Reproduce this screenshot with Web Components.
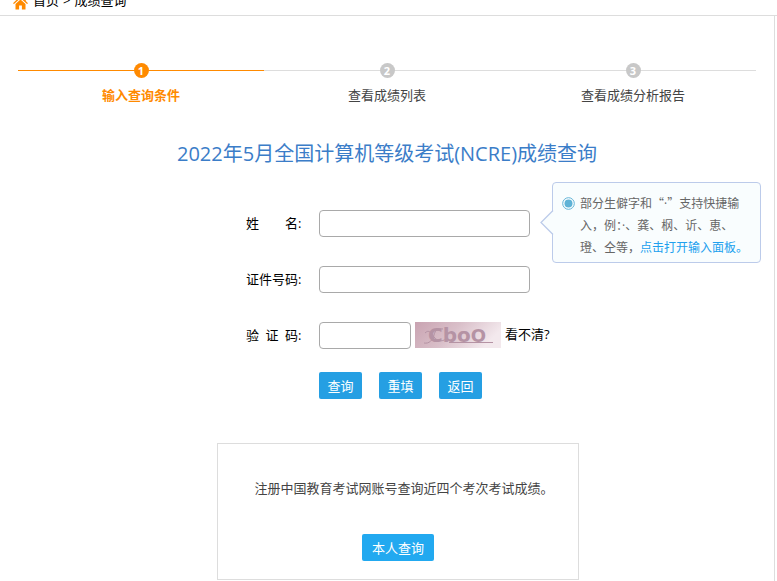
<!DOCTYPE html>
<html lang="zh-CN">
<head>
<meta charset="utf-8">
<meta name="viewport" content="width=device-width, initial-scale=1">
<title>成绩查询</title>
<style>
    body {
        margin: 0;
        overflow: hidden;
        background: #fff;
        color: #000;
        font: 13px/20px "Open Sans", "Noto Sans CJK SC", sans-serif;
    }
    main {
        margin-right: 2px;
        padding: 44px 18px 1px;
        border-right: 1px solid #ddd;
    }
    h1 {
        margin: 33px 0 0;
        color: #3b7dc8;
        font-size: 20px;
        font-weight: 400;
        line-height: 32px;
        text-align: center;
    }
</style>
</head>
<body>
<page-crumbs current="成绩查询"></page-crumbs>
<main>
    <step-bar>
        <step-item number="1" active>输入查询条件</step-item>
        <step-item number="2">查看成绩列表</step-item>
        <step-item number="3">查看成绩分析报告</step-item>
    </step-bar>
    <h1>2022年5月全国计算机等级考试(NCRE)成绩查询</h1>
    <query-form></query-form>
    <account-box>注册中国教育考试网账号查询近四个考次考试成绩。</account-box>
</main>

<script>
class PageCrumbs extends HTMLElement {
    constructor() {
        super();
        this.attachShadow({ mode: 'open' });
        this.shadowRoot.innerHTML = `
        <style>
            :host {
                display: block;
                margin-top: -13px;
                border-bottom: 1px solid #ddd;
            }
            nav {
                display: flex;
                align-items: center;
                gap: 4px;
                height: 26px;
                padding: 0 0 2px 13px;
            }
            a {
                color: inherit;
                text-decoration: none;
            }
            svg {
                display: block;
                margin: 4px 1px 0 0;
            }
        </style>
        <nav>
            <svg width="15" height="15" viewBox="0 0 15 15" fill="#ff8a00" aria-hidden="true">
                <path d="M7.5 1 0 8.2l1 .9 6.5-6 6.5 6 1-.9-2.2-2.1V2h-2v2.2z"/>
                <path d="M7.5 4.5 2.5 9v5.5h3.6v-4h2.8v4h3.6V9z"/>
            </svg>
            <a href="#">首页</a>
            <span>&gt;</span>
            <span class="current"></span>
        </nav>
        `;
    }

    connectedCallback() {
        this.shadowRoot.querySelector('.current').textContent = this.getAttribute('current');
    }
}

class StepBar extends HTMLElement {
    constructor() {
        super();
        this.attachShadow({ mode: 'open' });
        this.shadowRoot.innerHTML = `
        <style>
            :host {
                display: grid;
                grid-template-columns: repeat(3, 1fr);
            }
        </style>
        <slot></slot>
        `;
    }
}

class StepItem extends HTMLElement {
    constructor() {
        super();
        this.attachShadow({ mode: 'open' });
        this.shadowRoot.innerHTML = `
        <style>
            :host {
                --line: #ddd;
                --dot: #c8c8c8;
                display: block;
                color: #444;
                text-align: center;
            }
            :host([active]) {
                --line: #ff8a00;
                --dot: #ff8a00;
                color: #ff8a00;
                font-weight: 700;
            }
            .track {
                display: flex;
                align-items: center;
                height: 21px;
            }
            .track::before,
            .track::after {
                content: "";
                flex: 1;
                height: 1px;
                background: var(--line);
            }
            .number {
                width: 15px;
                height: 15px;
                border-radius: 50%;
                background: var(--dot);
                color: #fff;
                font-size: 11px;
                font-weight: 700;
                line-height: 15px;
            }
            .label {
                margin-top: 4px;
            }
        </style>
        <div class="track"><span class="number"></span></div>
        <div class="label"><slot></slot></div>
        `;
    }

    connectedCallback() {
        this.shadowRoot.querySelector('.number').textContent = this.getAttribute('number');
    }
}

class InputTip extends HTMLElement {
    constructor() {
        super();
        this.attachShadow({ mode: 'open' });
        this.shadowRoot.innerHTML = `
        <style>
            :host {
                display: block;
                box-sizing: border-box;
                width: 209px;
                padding: 9px 10px 5px 9px;
                border: 1px solid #bccbea;
                border-radius: 4px;
                background: #f9fdfe;
                color: #666;
                font-family: "Noto Sans CJK SC", sans-serif;
                font-size: 12px;
                line-height: 21px;
            }
            .arrow {
                position: absolute;
                left: -13px;
                top: 26px;
            }
            .body {
                display: flex;
                gap: 5px;
            }
            .dot {
                flex: none;
                margin-top: 5px;
            }
        </style>
        <svg class="arrow" width="14" height="26" viewBox="0 0 14 26" aria-hidden="true">
            <path d="M14 1 1 13.5 14 26z" fill="#f9fdfe"/>
            <path d="M13 1.5 1 13.5 13 25.5" fill="none" stroke="#bccbea" stroke-width="1.3"/>
        </svg>
        <div class="body">
            <svg class="dot" width="13" height="13" viewBox="0 0 13 13" aria-hidden="true">
                <circle cx="6.5" cy="6.5" r="5.8" fill="#fff" stroke="#5fb2d6"/>
                <circle cx="6.5" cy="6.5" r="4" fill="#5fb2d6"/>
            </svg>
            <div><slot></slot></div>
        </div>
        `;
    }
}

class QueryForm extends HTMLElement {
    constructor() {
        super();
        this.attachShadow({ mode: 'open' });
        this.shadowRoot.innerHTML = `
        <style>
            :host {
                display: block;
                position: relative;
                margin-top: 40px;
            }
            form {
                display: grid;
                grid-template-columns: 56px 211px;
                column-gap: 17px;
                row-gap: 29px;
                align-items: center;
                width: 284px;
                margin: 0 auto;
                padding-left: 2px;
            }
            label {
                display: flex;
                padding-bottom: 2px;
            }
            label span {
                display: flex;
                flex: none;
                justify-content: space-between;
                width: 52px;
            }
            input {
                box-sizing: border-box;
                width: 100%;
                height: 27px;
                padding: 0 6px;
                border: 1px solid #a9a9a9;
                border-radius: 4px;
                background: #fff;
                font: inherit;
            }
            .captcha {
                display: flex;
                gap: 4px;
                white-space: nowrap;
            }
            .captcha input {
                flex: none;
                width: 92px;
            }
            .captcha svg {
                flex: none;
            }
            a {
                color: inherit;
                text-decoration: none;
            }
            .captcha a {
                line-height: 24px;
            }
            .actions {
                display: flex;
                grid-column: 2;
                gap: 17px;
                margin-top: -6px;
            }
            button {
                min-width: 43px;
                height: 27px;
                padding: 0 8px;
                border: 0;
                border-radius: 2px;
                background: #259fe3;
                color: #fff;
                font: inherit;
                line-height: 24px;
                white-space: nowrap;
            }
            input-tip {
                position: absolute;
                top: -28px;
                left: calc(50% + 165px);
            }
            input-tip a {
                color: #20a0ee;
            }
            .point {
                font-family: "Open Sans", sans-serif;
            }
        </style>
        <form>
            <label for="name"><span><b style="font-weight: 400">姓</b><b style="font-weight: 400">名</b></span>:</label>
            <input id="name" type="text">
            <label for="card"><span>证件号码</span>:</label>
            <input id="card" type="text">
            <label for="code"><span><b style="font-weight: 400">验</b><b style="font-weight: 400">证</b><b style="font-weight: 400">码</b></span>:</label>
            <div class="captcha">
                <input id="code" type="text">
                <svg width="86" height="26" viewBox="0 0 86 26" role="img" aria-label="验证码">
                    <defs>
                        <linearGradient id="haze" x1="0" y1="0" x2="1" y2="0.3">
                            <stop offset="0" stop-color="#c9a3b1"/>
                            <stop offset="0.5" stop-color="#d9bfc9"/>
                            <stop offset="1" stop-color="#f3e9ed"/>
                        </linearGradient>
                    </defs>
                    <rect width="86" height="26" fill="url(#haze)"/>
                    <g fill="#b593a4" font-family="DejaVu Sans" font-weight="700">
                        <text x="13" y="20" font-size="20">Cbo<tspan font-size="18">O</tspan></text>
                    </g>
                    <path d="M10 11c4-4 6 0 9 4s8 5 12 2M9 21c5 1 9-3 10-8s5-7 9-6" fill="none" stroke="#b593a4"/>
                    <path d="M34 20.5h44" stroke="#b593a4"/>
                </svg>
                <a href="#">看不清?</a>
            </div>
            <div class="actions">
                <button type="button">查询</button>
                <button type="reset">重填</button>
                <button type="button">返回</button>
            </div>
        </form>
        <input-tip>部分生僻字和“<span class="point">·</span>”支持快捷输入，例：<span class="point">·</span>、龚、㭎、䜣、恵、璒、仝等，<a href="#">点击打开输入面板。</a></input-tip>
        `;
    }
}

class AccountBox extends HTMLElement {
    constructor() {
        super();
        this.attachShadow({ mode: 'open' });
        this.shadowRoot.innerHTML = `
        <style>
            :host {
                display: block;
                box-sizing: border-box;
                max-width: 362px;
                margin: 44px 0 0 calc(50% - 170px);
                padding: 34px 16px 18px;
                border: 1px solid #ddd;
                color: #444;
                text-align: center;
            }
            p {
                margin: 0 0 36px;
                padding-left: 12px;
            }
            button {
                display: block;
                height: 27px;
                margin: 0 auto;
                padding: 0 10px;
                border: 0;
                border-radius: 2px;
                background: #22a9f0;
                color: #fff;
                font: inherit;
                line-height: 24px;
            }
        </style>
        <p><slot></slot></p>
        <button type="button">本人查询</button>
        `;
    }
}

customElements.define('page-crumbs', PageCrumbs);
customElements.define('step-bar', StepBar);
customElements.define('step-item', StepItem);
customElements.define('input-tip', InputTip);
customElements.define('query-form', QueryForm);
customElements.define('account-box', AccountBox);
</script>
</body>
</html>
